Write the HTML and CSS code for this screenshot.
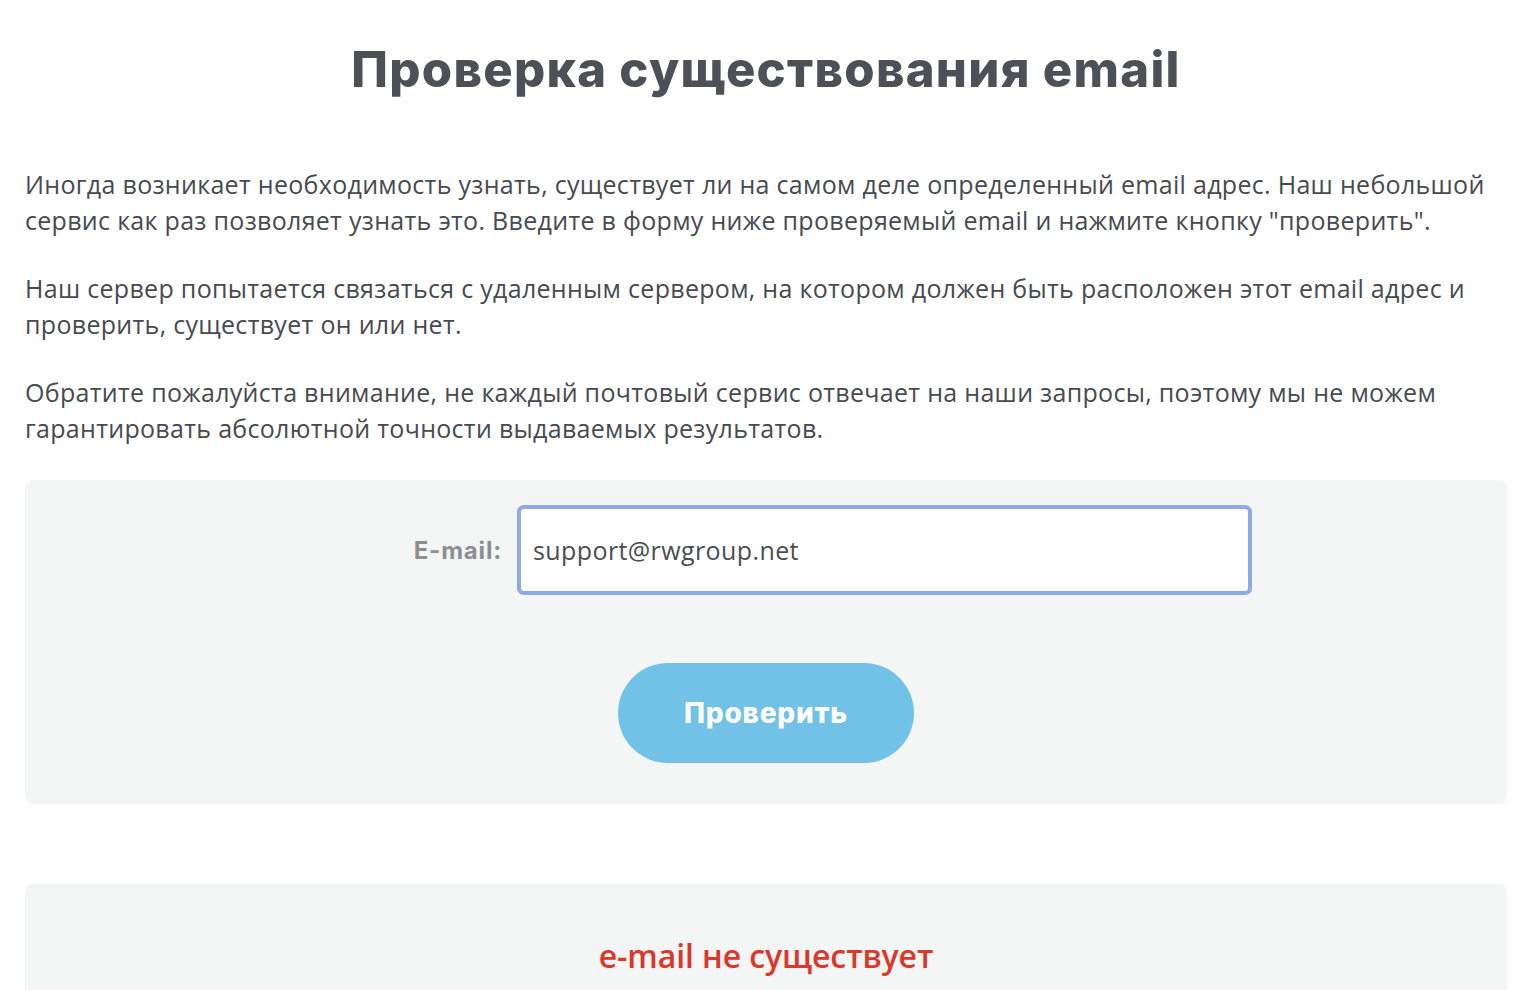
FILE: index.html
```html
<!DOCTYPE html>
<html lang="ru">
<head>
<meta charset="utf-8">
<title>Проверка существования email</title>
<link rel="stylesheet" href="styles.css">
</head>
<body>
<main class="page">
  <h1 class="title">Проверка существования email</h1>
  <p class="text">Иногда возникает необходимость узнать, существует ли на самом деле определенный email адрес. Наш небольшой сервис как раз позволяет узнать это. Введите в форму ниже проверяемый email и нажмите кнопку "проверить".</p>
  <p class="text">Наш сервер попытается связаться с удаленным сервером, на котором должен быть расположен этот email адрес и проверить, существует он или нет.</p>
  <p class="text text-last">Обратите пожалуйста внимание, не каждый почтовый сервис отвечает на наши запросы, поэтому мы не можем гарантировать абсолютной точности выдаваемых результатов.</p>

  <form class="panel form-panel">
    <div class="row">
      <label class="label" for="email">E-mail:</label>
      <div class="field"><input id="email" class="input" type="text" value="support@rwgroup.net"></div>
    </div>
    <div class="actions">
      <button type="button" class="btn">Проверить</button>
    </div>
  </form>

  <section class="panel result-panel">
    <div class="result">e-mail не существует</div>
  </section>
</main>
</body>
</html>
```

FILE: styles.css
```css
html, body {
  margin: 0;
  padding: 0;
  background: #ffffff;
}
body {
  font-family: "Open Sans", "Noto Sans", sans-serif;
  color: #4b4e53;
}
.page {
  padding: 0 21px 0 25px;
}
.title {
  margin: 0;
  padding-top: 40px;
  height: 88px;
  box-sizing: border-box;
  text-align: center;
  font-family: "Inter", "Open Sans", sans-serif;
  font-weight: 800;
  font-size: 49px;
  line-height: 60px;
  color: #4d5157;
  letter-spacing: 1.3px;
}
.text {
  margin: 0 0 32px;
  font-size: 25px;
  line-height: 36px;
  font-weight: 500;
  letter-spacing: 0.3px;
  color: #474a4f;
}
.text:first-of-type {
  margin-top: 78px;
}
.text-last {
  margin-bottom: 34px;
}
.panel {
  background: #f4f5f5;
  border-radius: 8px;
}
.form-panel {
  margin: 0;
  padding: 25px 0 41px;
}
.row {
  display: flex;
  align-items: center;
}
.label {
  flex: 0 0 492px;
  box-sizing: border-box;
  padding-right: 15px;
  text-align: right;
  font-family: "Inter", sans-serif;
  font-weight: 700;
  font-size: 24px;
  letter-spacing: 0.8px;
  color: #8c8f91;
}
.field {
  flex: 0 0 735px;
}
.input {
  display: block;
  width: 100%;
  height: 90px;
  box-sizing: border-box;
  border: 4px solid #8fa9e8;
  border-radius: 7px;
  background: #ffffff;
  padding: 0 12px;
  font-family: "Open Sans", sans-serif;
  font-size: 25px;
  font-weight: 500;
  letter-spacing: 0.4px;
  color: #4b4e53;
  outline: none;
}
.actions {
  display: flex;
  justify-content: center;
  margin-top: 68px;
}
.btn {
  width: 296px;
  height: 100px;
  border: none;
  border-radius: 50px;
  background: #72c1e6;
  color: #ffffff;
  font-family: "Inter", sans-serif;
  font-weight: 800;
  font-size: 28px;
  letter-spacing: 0.8px;
  cursor: pointer;
}
.result-panel {
  margin-top: 80px;
  height: 140px;
  padding-top: 52px;
  box-sizing: border-box;
  text-align: center;
}
.result {
  font-family: "Open Sans", sans-serif;
  font-weight: 600;
  font-size: 32px;
  line-height: 40px;
  color: #d9382a;
  letter-spacing: -0.1px;
}
```
